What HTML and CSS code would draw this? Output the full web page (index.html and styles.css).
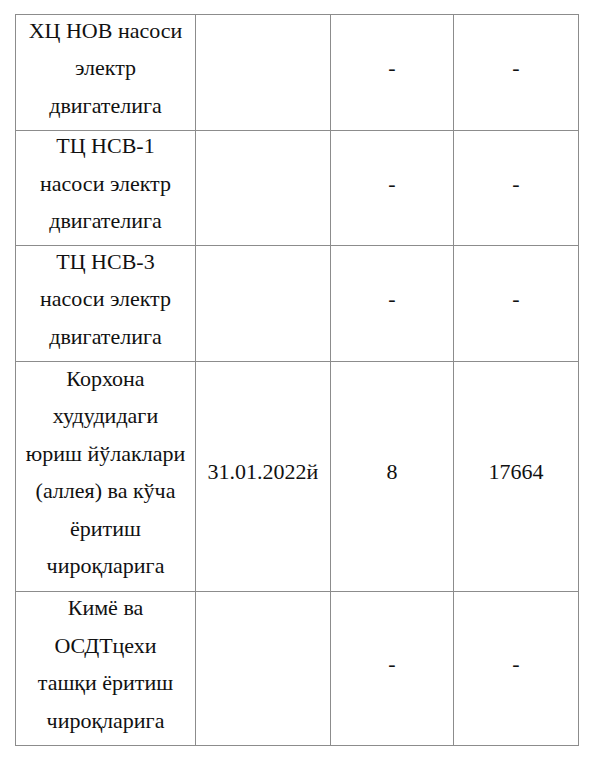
FILE: index.html
```html
<!DOCTYPE html>
<html>
<head>
<meta charset="utf-8">
<link rel="stylesheet" href="styles.css">
</head>
<body>
<table class="grid">
  <colgroup>
    <col class="c1"><col class="c2"><col class="c3"><col class="c4">
  </colgroup>
  <tr class="r3">
    <td><div class="t">ХЦ НОВ насоси<br>электр<br>двигателига</div></td>
    <td></td>
    <td><div class="t">-</div></td>
    <td><div class="t">-</div></td>
  </tr>
  <tr class="r3">
    <td><div class="t">ТЦ НСВ-1<br>насоси электр<br>двигателига</div></td>
    <td></td>
    <td><div class="t">-</div></td>
    <td><div class="t">-</div></td>
  </tr>
  <tr class="r3b">
    <td><div class="t">ТЦ НСВ-3<br>насоси электр<br>двигателига</div></td>
    <td></td>
    <td><div class="t">-</div></td>
    <td><div class="t">-</div></td>
  </tr>
  <tr class="r6">
    <td><div class="t">Корхона<br>худудидаги<br>юриш йўлаклари<br>(аллея) ва кўча<br>ёритиш<br>чироқларига</div></td>
    <td><div class="t">31.01.2022й</div></td>
    <td><div class="t">8</div></td>
    <td><div class="t">17664</div></td>
  </tr>
  <tr class="r4">
    <td><div class="t">Кимё ва<br>ОСДТцехи<br>ташқи ёритиш<br>чироқларига</div></td>
    <td></td>
    <td><div class="t">-</div></td>
    <td><div class="t">-</div></td>
  </tr>
</table>
</body>
</html>
```

FILE: styles.css
```css
html, body {
  margin: 0;
  padding: 0;
  background: #ffffff;
}
body {
  padding: 14px 0 0 15px;
  font-family: "Liberation Serif", "Times New Roman", serif;
  font-size: 22px;
  color: #111111;
}
.grid {
  border-collapse: collapse;
  table-layout: fixed;
  width: 563px;
  font-family: "Liberation Serif", "Times New Roman", serif;
  font-size: 22px;
}
.c1 { width: 180px; }
.c2 { width: 135px; }
.c3 { width: 123px; }
.c4 { width: 125px; }
.grid td {
  border: 1px solid #8c8c8c;
  padding: 0;
  text-align: center;
  vertical-align: middle;
  line-height: 37.5px;
  white-space: nowrap;
}
.t {
  font-family: "Liberation Serif", "Times New Roman", serif;
  margin-top: -4.5px;
  margin-bottom: 4.5px;
}
.r3 td { height: 114.5px; }
.r3b td { height: 115px; }
.r6 td { height: 229px; }
.r4 td { height: 153px; }
```
